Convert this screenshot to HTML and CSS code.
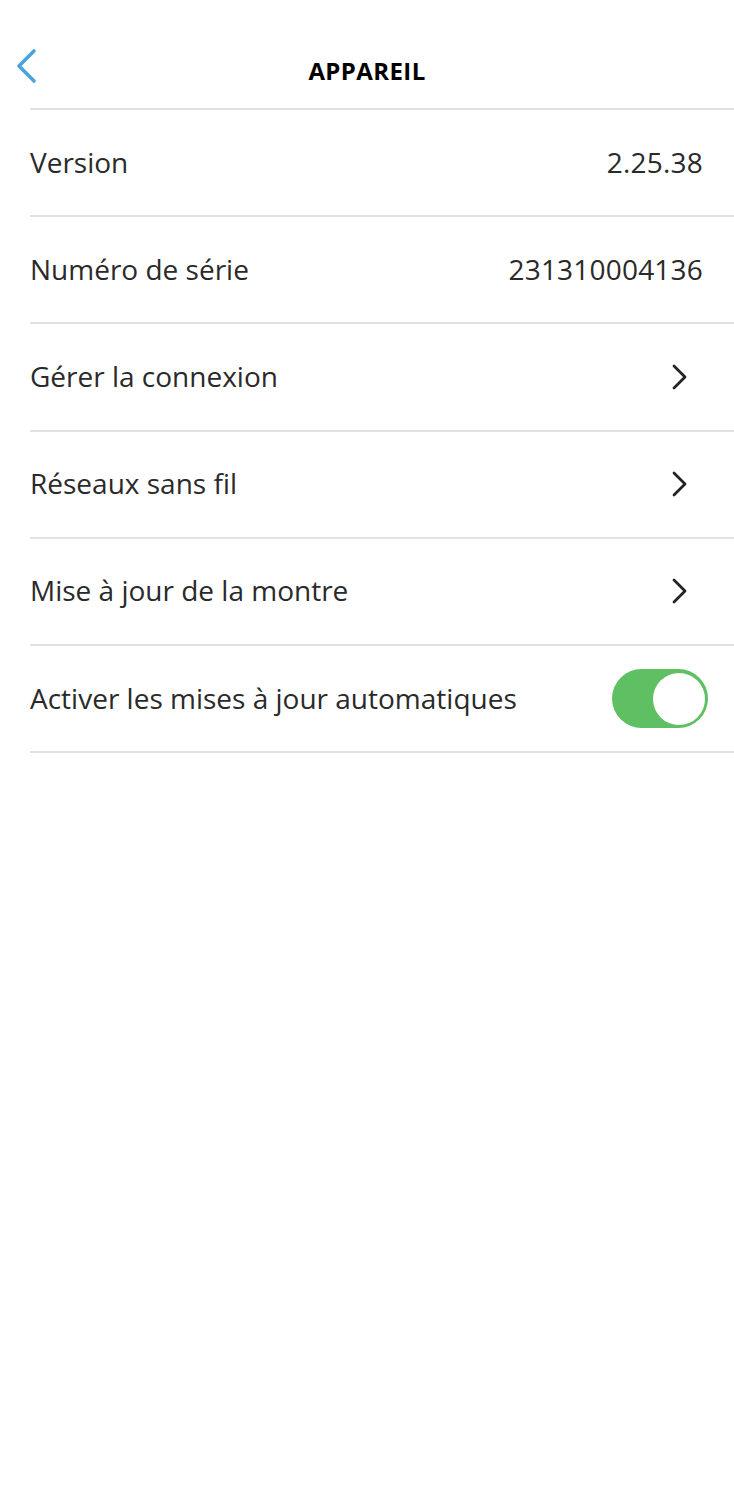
FILE: index.html
```html
<!DOCTYPE html>
<html lang="fr">

<head>
    <meta charset="UTF-8">
    <meta name="viewport" content="width=device-width, initial-scale=1.0">
    <title>Appareil</title>
    <link rel="stylesheet" href="styles.css">
</head>

<body>
    <div class="header">
        <button class="back">
            <svg width="24" height="36" viewBox="0 0 24 36">
                <path d="M20 3 L5 18 L20 33" fill="none" stroke="#4aa3df" stroke-width="3.6" stroke-linecap="round" stroke-linejoin="round"/>
            </svg>
        </button>
        <h1>APPAREIL</h1>
    </div>

    <div class="list">
        <div class="row">
            <span class="label">Version</span>
            <span class="value">2.25.38</span>
        </div>
        <div class="row">
            <span class="label">Numéro de série</span>
            <span class="value">231310004136</span>
        </div>
        <div class="row">
            <span class="label">Gérer la connexion</span>
            <svg class="chevron" width="18" height="28" viewBox="0 0 18 28">
                <path d="M3 3 L14 14 L3 25" fill="none" stroke="#222" stroke-width="2.8" stroke-linecap="round" stroke-linejoin="round"/>
            </svg>
        </div>
        <div class="row">
            <span class="label">Réseaux sans fil</span>
            <svg class="chevron" width="18" height="28" viewBox="0 0 18 28">
                <path d="M3 3 L14 14 L3 25" fill="none" stroke="#222" stroke-width="2.8" stroke-linecap="round" stroke-linejoin="round"/>
            </svg>
        </div>
        <div class="row">
            <span class="label">Mise à jour de la montre</span>
            <svg class="chevron" width="18" height="28" viewBox="0 0 18 28">
                <path d="M3 3 L14 14 L3 25" fill="none" stroke="#222" stroke-width="2.8" stroke-linecap="round" stroke-linejoin="round"/>
            </svg>
        </div>
        <div class="row">
            <span class="label">Activer les mises à jour automatiques</span>
            <div class="toggle on">
                <div class="knob"></div>
            </div>
        </div>
    </div>
</body>

</html>
```

FILE: styles.css
```css
body {
    margin: 0;
    background-color: white;
    font-family: "Open Sans", Arial, sans-serif;
    color: #2a2a2a;
}

.header {
    height: 108px;
    display: flex;
    align-items: center;
    justify-content: center;
    position: relative;
}

.header h1 {
    margin: 0;
    margin-top: 32px;
    font-size: 24px;
    font-weight: 700;
    color: black;
    letter-spacing: 0.4px;
}

.back {
    position: absolute;
    left: 14px;
    top: 48px;
    padding: 0;
    border: none;
    background: none;
}

.list {
    margin-left: 30px;
    border-top: 2px solid #e2e2e2;
}

.row {
    height: 105.2px;
    display: flex;
    align-items: center;
    justify-content: space-between;
    border-bottom: 2px solid #e2e2e2;
    padding-right: 31px;
    font-size: 28px;
}

.label {
    margin-top: -2px;
}

.value {
    margin-top: -2px;
    letter-spacing: 0.2px;
}

.chevron {
    margin-right: 14px;
}

.toggle {
    width: 96px;
    height: 59px;
    border-radius: 30px;
    background-color: #5ec062;
    margin-right: -5px;
    display: flex;
    align-items: center;
    justify-content: flex-end;
    box-sizing: border-box;
    padding-right: 3px;
}

.knob {
    width: 52px;
    height: 52px;
    border-radius: 50%;
    background-color: white;
}
```
